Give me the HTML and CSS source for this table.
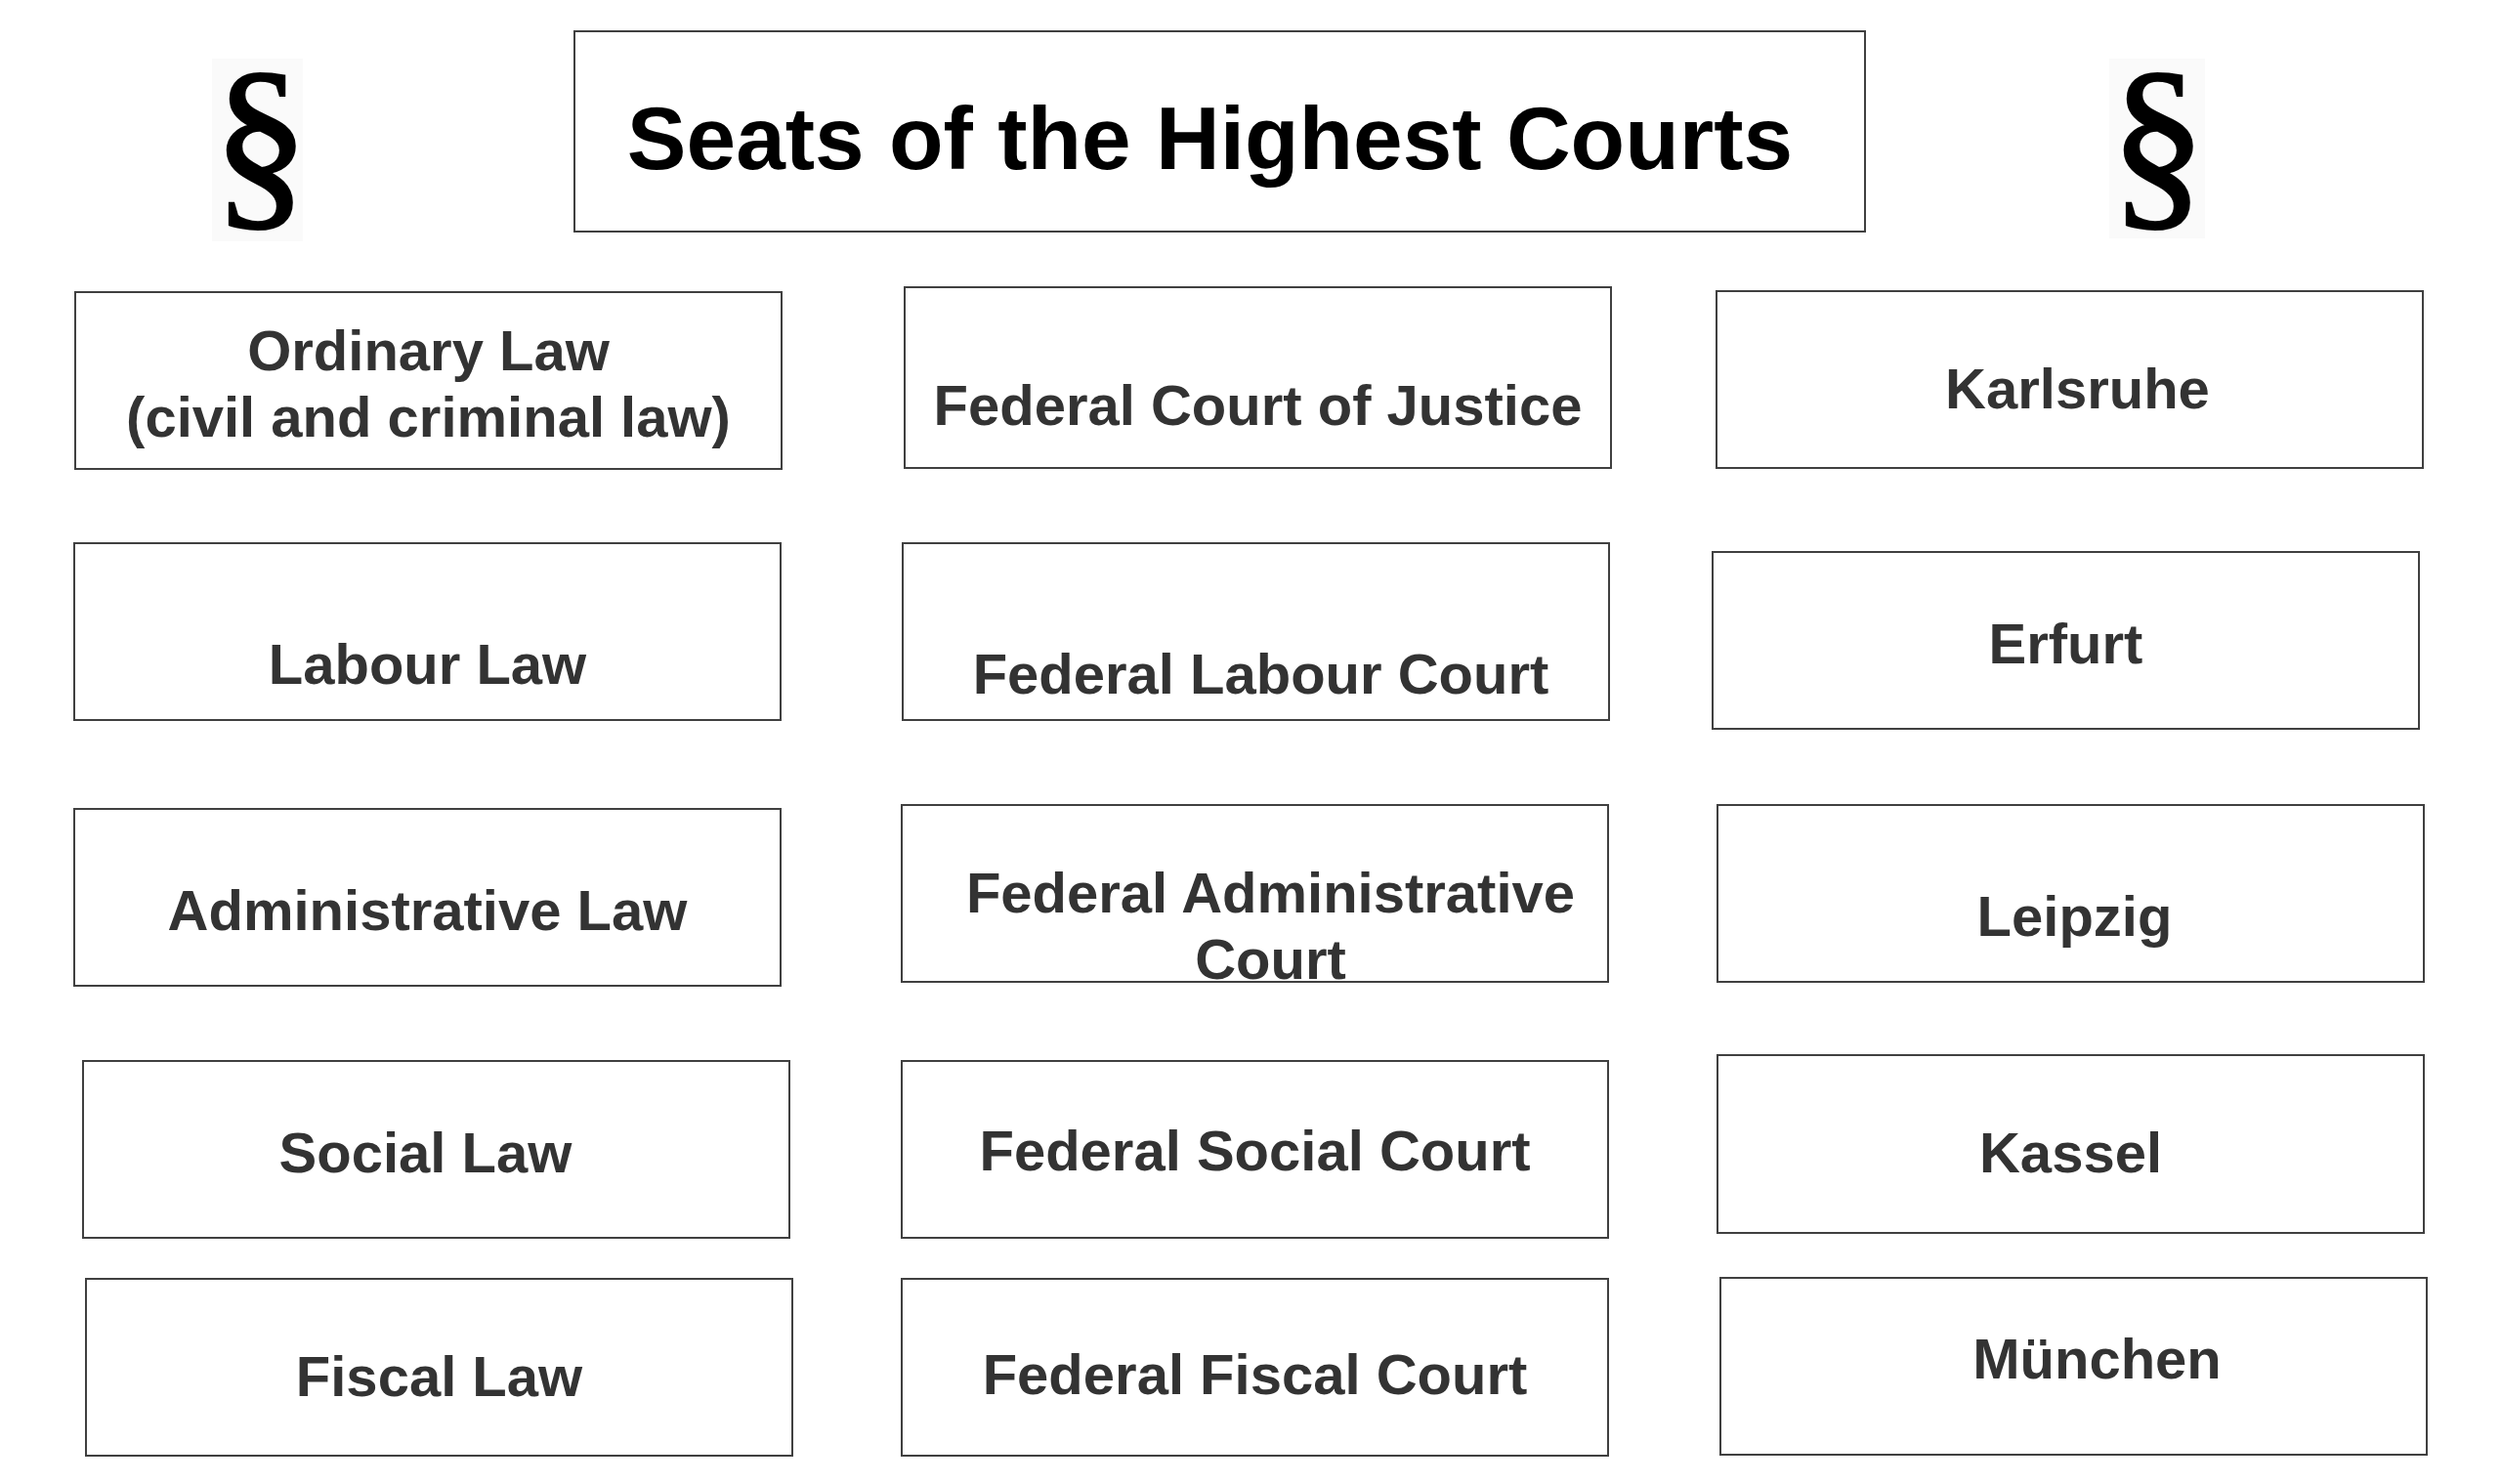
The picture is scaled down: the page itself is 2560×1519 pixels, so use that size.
FILE: index.html
```html
<!DOCTYPE html>
<html lang="en">
<head>
<meta charset="utf-8">
<title>Seats of the Highest Courts</title>
<link rel="stylesheet" href="styles.css">
</head>
<body>
<main class="page">
  <header class="header">
    <div class="side side-left">
      <div class="para"><span class="para-glyph">§</span></div>
    </div>
    <div class="title-box"><h1 class="title">Seats of the Highest Courts</h1></div>
    <div class="side side-right">
      <div class="para para-right"><span class="para-glyph">§</span></div>
    </div>
  </header>

  <section class="columns">
    <div class="column col-a">
      <div class="card a1">Ordinary Law<br>(civil and criminal law)</div>
      <div class="card a2">Labour Law</div>
      <div class="card a3">Administrative Law</div>
      <div class="card a4">Social Law</div>
      <div class="card a5">Fiscal Law</div>
    </div>
    <div class="column col-b">
      <div class="card b1">Federal Court of Justice</div>
      <div class="card b2">Federal Labour Court</div>
      <div class="card b3">Federal Administrative Court</div>
      <div class="card b4">Federal Social Court</div>
      <div class="card b5">Federal Fiscal Court</div>
    </div>
    <div class="column col-c">
      <div class="card c1">Karlsruhe</div>
      <div class="card c2">Erfurt</div>
      <div class="card c3">Leipzig</div>
      <div class="card c4">Kassel</div>
      <div class="card c5">München</div>
    </div>
  </section>
</main>
</body>
</html>
```
FILE: styles.css
```css
html, body {
  margin: 0;
  padding: 0;
  background: #ffffff;
}

.page {
  width: 2560px;
  height: 1519px;
  padding-top: 31px;
  box-sizing: border-box;
  font-family: "Liberation Sans", Arial, sans-serif;
  overflow: hidden;
}

/* ---------- header ---------- */
.header {
  display: flex;
  align-items: flex-start;
  height: 207px;
}

.side-left {
  width: 587px;
  flex: none;
}

.side-right {
  flex: 1;
}

.para {
  margin-top: 29px;
  margin-left: 217px;
  width: 93px;
  height: 187px;
  background: #fafafa;
  text-align: center;
}

.para-right {
  margin-left: 249px;
  width: 98px;
  height: 184px;
}

.para-glyph {
  display: block;
  padding-top: 5px;
  font-family: "Liberation Serif", "Times New Roman", serif;
  font-size: 199px;
  line-height: 156px;
  color: #000;
  -webkit-text-stroke: 2px #000;
}

.title-box {
  flex: none;
  width: 1323px;
  height: 207px;
  box-sizing: border-box;
  border: 2px solid #404040;
  padding-top: 57px;
  padding-right: 20px;
  text-align: center;
}

.title {
  margin: 0;
  font-size: 91px;
  font-weight: bold;
  line-height: 1.15;
  color: #000;
}

/* ---------- columns ---------- */
.columns {
  display: flex;
  padding-left: 75px;
}

.column {
  display: flex;
  flex-direction: column;
  align-items: flex-start;
}

.col-a { width: 847px; }
.col-b { width: 830px; }
.col-c { flex: 1; }

.card {
  box-sizing: border-box;
  width: 725px;
  height: 183px;
  border: 2px solid #404040;
  background: #fff;
  text-align: center;
  font-size: 58px;
  font-weight: bold;
  line-height: 68px;
  color: #333333;
}

/* column A */
.a1 { margin-top: 60px; margin-left: 1px; padding-top: 25px; }
.a2 { margin-top: 74px; padding-top: 89px; }
.a3 { margin-top: 89px; padding-top: 69px; }
.a4 { margin-top: 75px; margin-left: 9px; padding-top: 59px; padding-right: 22px; }
.a5 { margin-top: 40px; margin-left: 12px; padding-top: 65px; }

/* column B */
.b1 { margin-top: 55px; margin-left: 3px; height: 187px; padding-top: 86px; }
.b2 { margin-top: 75px; margin-left: 1px; padding-top: 99px; padding-left: 10px; }
.b3 { margin-top: 85px; padding-top: 55px; padding-left: 32px; }
.b4 { margin-top: 79px; padding-top: 57px; }
.b5 { margin-top: 40px; padding-top: 63px; }

/* column C */
.c1 { margin-top: 59px; margin-left: 4px; padding-top: 65px; padding-left: 16px; }
.c2 { margin-top: 84px; padding-top: 59px; }
.c3 { margin-top: 76px; margin-left: 5px; padding-top: 79px; padding-left: 8px; }
.c4 { margin-top: 73px; margin-left: 5px; height: 184px; padding-top: 65px; }
.c5 { margin-top: 44px; margin-left: 8px; padding-top: 48px; padding-left: 48px; }
```
